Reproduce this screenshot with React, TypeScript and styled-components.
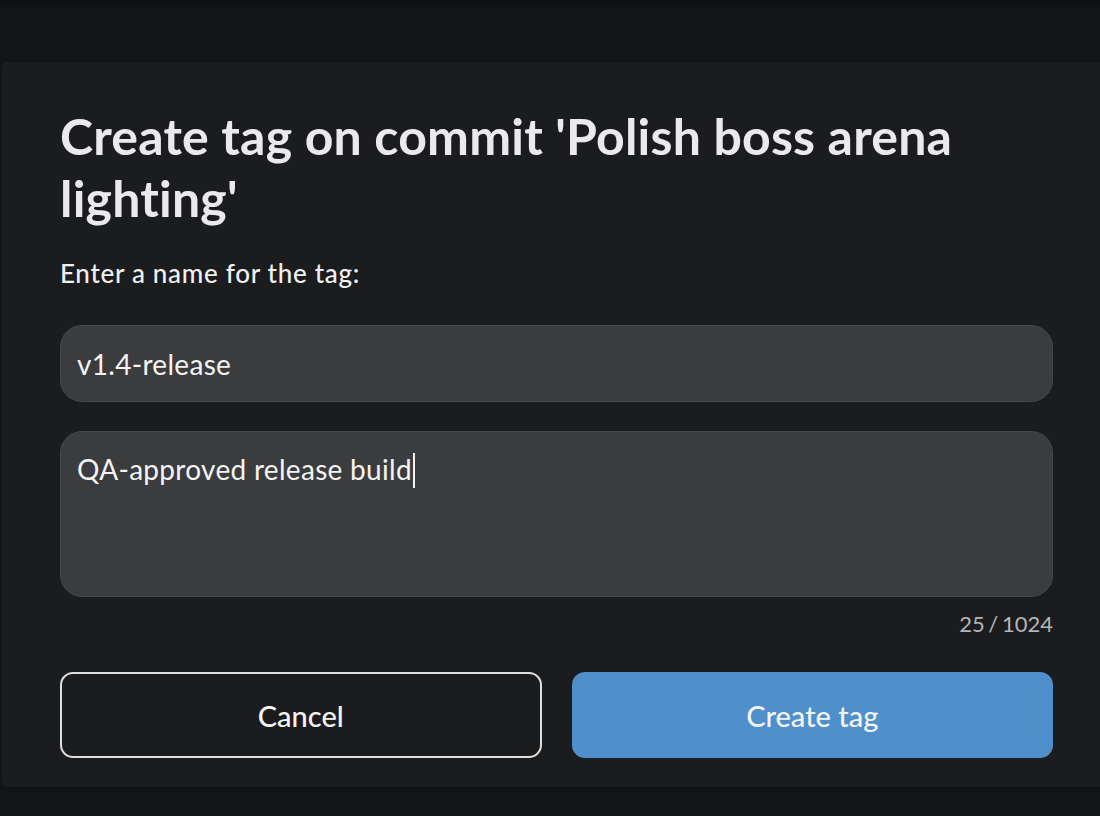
import React from "react";
import styled, { createGlobalStyle } from "styled-components";

const Global = createGlobalStyle`
  html, body { margin: 0; padding: 0; background: #131416; }
  body { font-family: Lato, "Noto Sans", sans-serif; width: 1100px; height: 816px; overflow: hidden; }
  * { box-sizing: border-box; }
`;

const Page = styled.div`
  width: 1100px;
  height: 816px;
  padding-top: 62px;
  padding-left: 2px;
  background: linear-gradient(#0e0f11 0px, #131416 6px, #131416 100%);
`;

const Dialog = styled.div`
  width: 1098px;
  height: 725px;
  background: #1b1c1e;
  border-radius: 5px 0 0 5px;
  padding: 43px 47px 0 58px;
  display: flex;
  flex-direction: column;
`;

const Title = styled.h1`
  margin: 0;
  font-family: Lato, sans-serif;
  font-weight: 700;
  font-size: 50px;
  line-height: 62px;
  color: #eaeaec;
  letter-spacing: 0.2px;
`;

const Label = styled.div`
  margin-top: 28px;
  font-size: 26px;
  line-height: 32px;
  color: #f0f0f2;
  font-weight: 500;
  letter-spacing: 0.7px;
`;

const Field = styled.div<{ $multiline?: boolean }>`
  height: ${(p) => (p.$multiline ? 166 : 77)}px;
  margin-top: ${(p) => (p.$multiline ? 29 : 36)}px;
  background: #3b3c3e;
  border: 1px solid #464749;
  border-radius: 22px;
  padding: ${(p) => (p.$multiline ? "20px 16px 0" : "0 16px")};
  display: flex;
  align-items: ${(p) => (p.$multiline ? "flex-start" : "center")};
  font-size: 28px;
  line-height: 34px;
  letter-spacing: 0.3px;
  color: #f4f4f5;
`;

const Caret = styled.span`
  display: inline-block;
  width: 2px;
  height: 35px;
  background: #f4f4f5;
  margin-left: 1px;
  vertical-align: -8px;
`;

const Counter = styled.div`
  margin-top: 14px;
  text-align: right;
  font-size: 22px;
  line-height: 26px;
  color: #b4b4b6;
  word-spacing: -2px;
`;

const Actions = styled.div`
  margin-top: 35px;
  display: grid;
  grid-template-columns: 1fr 1fr;
  gap: 30px;
`;

const Button = styled.button<{ $primary?: boolean }>`
  height: 86px;
  border-radius: 13px;
  font-family: Lato, sans-serif;
  font-size: 29px;
  font-weight: 500;
  color: #f4f4f5;
  background: ${(p) => (p.$primary ? "#4f8fcb" : "transparent")};
  border: ${(p) => (p.$primary ? "none" : "2px solid #dedede")};
  cursor: pointer;
`;

export default function App() {
  return (
    <>
      <Global />
      <Page>
        <Dialog>
          <Title>Create tag on commit 'Polish boss arena lighting'</Title>
          <Label>Enter a name for the tag:</Label>
          <Field>v1.4-release</Field>
          <Field $multiline>
            <span>QA-approved release build<Caret /></span>
          </Field>
          <Counter>25 / 1024</Counter>
          <Actions>
            <Button>Cancel</Button>
            <Button $primary>Create tag</Button>
          </Actions>
        </Dialog>
      </Page>
    </>
  );
}
